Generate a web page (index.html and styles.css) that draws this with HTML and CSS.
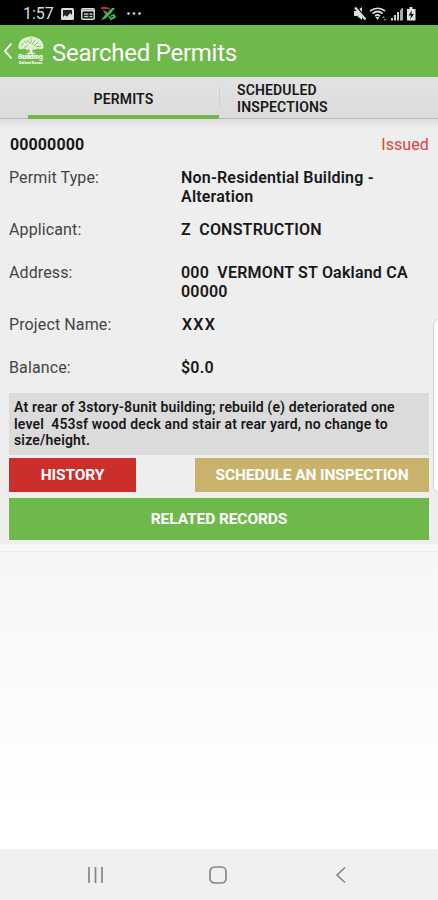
FILE: index.html
```html
<!DOCTYPE html>
<html lang="en">
<head>
	<meta charset="UTF-8">
	<meta name="viewport" content="width=device-width, initial-scale=1">
	<title>Searched Permits</title>
	<link rel="stylesheet" href="styles.css">
</head>
<body>
	<div class="status-bar">
		<span class="clock">1:57</span>
		<svg class="status-left" width="84" height="18" viewBox="0 0 84 18">
			<rect x="1" y="3" width="13" height="12" rx="1.5" fill="#ddd"/>
			<path d="M3 5h9v5l-2-2-3 4-2-2-2 2z" fill="#222"/>
			<path d="M3 13l3-2 2 1 2-3 2 3v1z" fill="#ddd"/>
			<rect x="21.8" y="3.8" width="12.4" height="10.4" rx="1" fill="none" stroke="#ddd" stroke-width="1.5"/>
			<path d="M22 5.500h12" stroke="#ddd" stroke-width="2"/>
			<path d="M24 9h4.500M24 11.500h4.500M29.500 9h3M29.500 11.500h3" stroke="#ccc" stroke-width="1.6"/>
			<path d="M41 3h6l3 1" fill="none" stroke="#a33a2c" stroke-width="1.8"/>
			<path d="M41 15l4-5 3-3 4-4h3l-4 5-3 3-3 3z" fill="#45b957"/>
			<path d="M44 6l3 3M49 11l2 3 4-2-1-2-3 1" fill="none" stroke="#45b957" stroke-width="1.8"/>
			<path d="M43 5l3 2" stroke="#a33a2c" stroke-width="1.5"/>
			<g fill="#ddd"><circle cx="68.500" cy="8.500" r="1.300"/><circle cx="74" cy="8.500" r="1.300"/><circle cx="79.500" cy="8.500" r="1.300"/></g>
		</svg>
		<svg class="status-right" width="66" height="18" viewBox="0 0 66 18">
			<path d="M2 6h3l5-4v13l-5-4H2z" fill="#ddd"/>
			<path d="M4 1l10 12" stroke="#000" stroke-width="1.2"/>
			<path d="M3 2.500l10.500 12" stroke="#ddd" stroke-width="2.2"/>
			<path d="M18 6q8-5.500 15 0M20.500 8.500q5.500-4 10 0M23 11q2.500-2 5 0" fill="none" stroke="#ddd" stroke-width="1.7"/>
			<path d="M23.500 12h4l-2 3z" fill="#ddd"/>
			<path d="M30 13l1.500-2 1.500 2zM31.500 14h3L33 16z" fill="#888"/>
			<path d="M39 15.500h2v-2.500h-2zM42 15.500h2v-5.500h-2zM45 15.500h2V7h-2z" fill="#ccc"/>
			<path d="M48 15.500h3V3h-1l-2 2.500z" fill="#aaa"/>
			<path d="M55 4h2.500V2h3v2H63.500V15.500H55z" fill="#e4e4e4"/>
			<path d="M60 5.500l-3.500 5H59l-1 4 4-5.500h-2.500z" fill="#111"/>
		</svg>
	</div>

	<header class="app-bar">
		<svg class="back" width="11" height="18" viewBox="0 0 11 18">
			<path d="M9.500 1.500L3 9l6.500 7.500" fill="none" stroke="#fff" stroke-width="1.8"/>
		</svg>
		<div class="logo">
			<svg width="26" height="18" viewBox="0 0 26 18">
				<path d="M.500 12C0 7 3 3 7 2 10 0 16 0 19 2c4 1 7 5 6.500 10l-2 1.500-4-1-3 1.500-2-1v3l3 2H8.500l3-2V13l-2 1-3.500-1.500-3.500 1z" fill="#dff2d4"/>
				<path d="M3 10l3-3M6 11.500l4-2M9 4l3 4M13 2v5M17 4l-3 5M20 6l-4 4M23 10.500h-5M6 5l3 2" stroke="#6fb94b" stroke-width=".8"/>
			</svg>
			<span class="logo-name">Building</span>
			<span class="logo-sub">Oakland Bureau</span>
		</div>
		<h1>Searched Permits</h1>
	</header>

	<nav class="tabs">
		<div class="tab active"><span>PERMITS</span></div>
		<div class="divider"></div>
		<div class="tab inspections"><span>SCHEDULED<br>INSPECTIONS</span></div>
	</nav>

	<main>
		<section class="permit">
			<div class="permit-head">
				<span class="permit-id">00000000</span>
				<span class="permit-status">Issued</span>
			</div>
			<dl class="details">
				<div class="row">
					<dt>Permit Type:</dt>
					<dd>Non-Residential Building -<br>Alteration</dd>
				</div>
				<div class="row">
					<dt>Applicant:</dt>
					<dd>Z&nbsp; CONSTRUCTION</dd>
				</div>
				<div class="row">
					<dt>Address:</dt>
					<dd>000&nbsp; VERMONT ST Oakland CA<br>00000</dd>
				</div>
				<div class="row">
					<dt>Project Name:</dt>
					<dd class="project">XXX</dd>
				</div>
				<div class="row">
					<dt>Balance:</dt>
					<dd>$0.0</dd>
				</div>
			</dl>
			<p class="description">At rear of 3story-8unit building; rebuild (e) deteriorated one<br>level&nbsp; 453sf wood deck and stair at rear yard, no change to<br>size/height.</p>
			<div class="actions">
				<button class="btn history">HISTORY</button>
				<button class="btn schedule">SCHEDULE AN INSPECTION</button>
			</div>
			<button class="btn related">RELATED RECORDS</button>
		</section>
		<div class="list-end"></div>
	</main>

	<footer class="nav-bar">
		<svg width="18" height="18" viewBox="0 0 18 18">
			<path d="M2 1v16M8.500 1v16M15 1v16" stroke="#868686" stroke-width="1.700"/>
		</svg>
		<svg width="20" height="20" viewBox="0 0 20 20">
			<rect x="2" y="2" width="16" height="16" rx="4.500" fill="none" stroke="#868686" stroke-width="1.700"/>
		</svg>
		<svg width="12" height="18" viewBox="0 0 12 18">
			<path d="M10 1.500L2 9l8 7.500" fill="none" stroke="#868686" stroke-width="1.700"/>
		</svg>
	</footer>

	<div class="edge-panel"></div>
</body>
</html>
```
FILE: styles.css
```css
:root {
	--green: #6fb94b;
	--red: #cb2f2c;
	--gold: #c9b36c;
	--card: #eeeeee;
	--panel: #dbdbdb;
}

* {
	box-sizing: border-box;
}

body {
	margin: 0;
	width: 438px;
	height: 900px;
	overflow: hidden;
	position: relative;
	display: flex;
	flex-direction: column;
	font-family: Roboto, "Liberation Sans", sans-serif;
	color: #181818;
}

/* System status bar */
.status-bar {
	height: 25px;
	flex: none;
	display: flex;
	align-items: center;
	padding: 2px 20px 0 23px;
	background: #000;
	color: #ddd;
}

.clock {
	width: 37px;
	padding-top: 1px;
	font-size: 16px;
	line-height: 20px;
}

.status-right {
	margin-left: auto;
}

/* App header */
.app-bar {
	height: 52px;
	flex: none;
	display: flex;
	align-items: center;
	padding-left: 2px;
	background: var(--green);
	color: #fff;
}

.logo {
	width: 27px;
	margin: 0 8px 0 4px;
	display: flex;
	flex-direction: column;
	align-items: center;
	white-space: nowrap;
}

.logo-name {
	font-size: 6.5px;
	font-weight: 900;
	line-height: 7px;
}

.logo-sub {
	font-size: 3.3px;
	font-weight: bold;
	line-height: 5px;
}

h1 {
	margin: 0;
	padding-top: 4px;
	font-size: 24px;
	font-weight: 400;
	letter-spacing: -0.25px;
	white-space: nowrap;
}

/* Tabs */
.tabs {
	height: 42px;
	flex: none;
	display: flex;
	padding-left: 28px;
	background: linear-gradient(#e2e2e2, #dcdcdc);
	border-bottom: 1px solid #b9b9b9;
	font-size: 14px;
	font-weight: 600;
	line-height: 16.5px;
	letter-spacing: 0.15px;
}

.tab {
	height: 42px;
	display: flex;
	align-items: center;
	justify-content: center;
}

.tab.active {
	width: 191px;
	padding-top: 6px;
	border-bottom: 4px solid var(--green);
}

.divider {
	width: 1px;
	height: 22px;
	margin-top: 10px;
	background: #cfcfcf;
}

.tab.inspections {
	padding: 1px 0 0 17px;
}

/* Permit card */
main {
	flex: 1;
	background: linear-gradient(#f6f6f6 425px, #fff 680px);
}

.permit {
	height: 425px;
	padding: 16px 9px 0;
	background: linear-gradient(#dedede, var(--card) 9px);
}

.list-end {
	height: 8px;
	background: #f8f8f8;
	border-bottom: 1px solid #efefef;
}

.permit-head {
	display: flex;
	justify-content: space-between;
	font-size: 16px;
	line-height: 19px;
	letter-spacing: 0.1px;
}

.permit-id {
	padding-left: 1px;
	font-weight: 700;
}

.permit-status {
	color: #d94343;
}

.details {
	margin: 14px 0 0;
	font-size: 16px;
	line-height: 19px;
}

.row {
	display: flex;
	min-height: 43px;
	padding-bottom: 14px;
}

dt {
	width: 172px;
	color: #444;
	letter-spacing: 0.12px;
}

dd {
	margin: 0;
	font-weight: 600;
	letter-spacing: 0.2px;
	white-space: nowrap;
}

dd.project {
	padding-left: 1px;
	letter-spacing: 1.2px;
}

.description {
	height: 62px;
	margin: -8px 0 3px;
	padding: 6px 5px;
	background: var(--panel);
	font-size: 14px;
	font-weight: 600;
	line-height: 16.7px;
	letter-spacing: 0.16px;
	white-space: nowrap;
}

.actions {
	display: flex;
	justify-content: space-between;
	margin-bottom: 6px;
}

.btn {
	height: 34px;
	padding: 0;
	border: 0;
	color: #fff;
	font-family: inherit;
	font-size: 15.5px;
	font-weight: 700;
	letter-spacing: -0.1px;
}

.history {
	width: 127px;
	background: var(--red);
}

.schedule {
	width: 234px;
	background: var(--gold);
}

.related {
	display: block;
	width: 100%;
	height: 42px;
	background: var(--green);
}

/* System navigation */
.nav-bar {
	height: 51px;
	flex: none;
	display: flex;
	align-items: center;
	justify-content: space-between;
	padding: 0 91px 0 87px;
	background: #f0f0f0;
}

.nav-bar svg:nth-child(2) {
	margin-right: 4px;
}

/* Handle of the edge panel, lies over the card */
.edge-panel {
	position: absolute;
	top: 319px;
	right: -8px;
	width: 13px;
	height: 174px;
	background: #fff;
	border: 1px solid #d2d2d2;
	border-radius: 6px;
}
```
